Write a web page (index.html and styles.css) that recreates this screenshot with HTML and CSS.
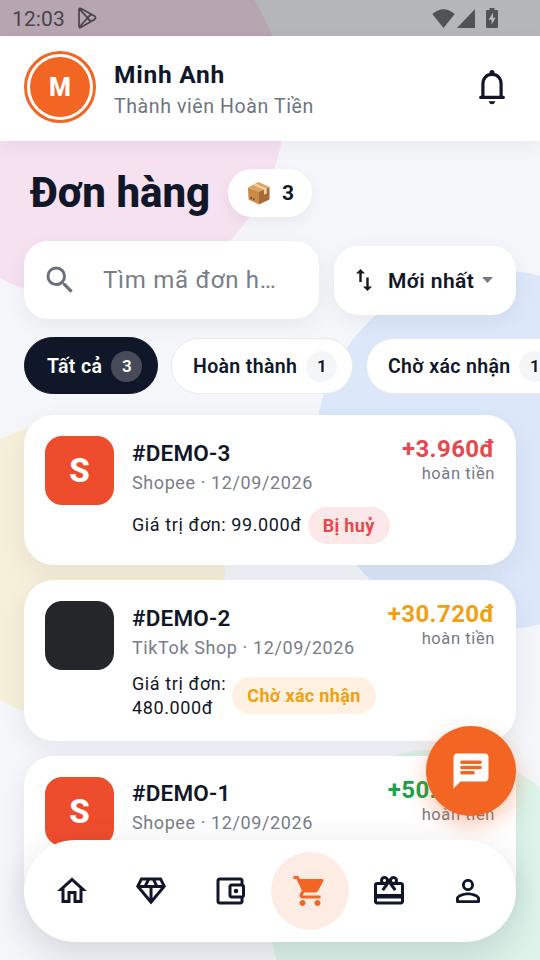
FILE: index.html
```html
<!DOCTYPE html>
<html lang="vi">
<head>
<meta charset="utf-8">
<title>Đơn hàng</title>
<link rel="stylesheet" href="styles.css">
</head>
<body>
<div class="app">
  <div class="blob pink"></div>
  <div class="blob blue"></div>
  <div class="blob yellow"></div>
  <div class="blob green"></div>

  <div class="status">
    <span class="clock">12:03</span>
    <svg class="play" viewBox="0 0 20 22" fill="none" stroke="#49434a" stroke-width="1.7" stroke-linejoin="round"><path d="M2 2.8Q2 .6 4 1.6L17.5 8.9Q19.6 10.6 17.5 12.4L4 20.3Q2 21.200 2 19zM2.400 1.900L14 14.500M2.400 20L14 7M14.500 7.300L10 11l4 3.600"/></svg>
    <div class="signals">
      <svg width="23" height="19" viewBox="0 0 24 19" preserveAspectRatio="none"><path fill="#505254" d="M12 19L.3 5Q12-4.500 23.700 5z"/></svg>
      <svg width="18" height="19" viewBox="0 0 19 19" preserveAspectRatio="none"><path fill="#505254" d="M19 0v19H0z"/></svg>
      <svg class="battery" width="12" height="20" viewBox="0 0 12 20"><path fill="#505254" d="M3.500 0h5v2H11q1 0 1 1v16q0 1-1 1H1q-1 0-1-1V3q0-1 1-1h2.500z"/><path fill="#b5b7ba" d="M7.200 4.500L2.500 11.800h3v5L9.700 9.800H7z"/></svg>
    </div>
  </div>

  <header class="header">
    <div class="avatar"><span>M</span></div>
    <div class="who">
      <div class="name">Minh Anh</div>
      <div class="role">Thành viên Hoàn Tiền</div>
    </div>
    <svg class="bell" viewBox="0 0 36 42" fill="none" stroke="#0f1728" stroke-width="3.200" stroke-linecap="round"><path d="M8.900 31V18.500C8.900 12 12.500 8.400 18 8.400s9.100 3.600 9.100 10.100V31"/><path d="M6.700 31.400h22.600"/><circle cx="18" cy="6.600" r="2.500" fill="#0f1728" stroke="none"/><path d="M14.700 35.300h6.600q-.8 3-3.300 3t-3.300-3z" fill="#0f1728" stroke="none"/></svg>
  </header>

  <main class="content">
    <div class="title-row">
      <h1>Đơn hàng</h1>
      <div class="count">
        <svg width="24" height="24" viewBox="0 0 24 24"><path fill="#c98b4b" d="M1 6.500L12 10.500V23.500L1.500 18.500z"/><path fill="#a86b37" d="M12 10.500L22.500 6v12.500L12 23.500z"/><path fill="#dba465" d="M1 6.500L11.500 1l11 5L12 10.800z"/><path fill="#f0cf9b" d="M6 4l11 4.700v5l2-1 .8.200V7.300L8.500 2.600z"/><path fill="#6b4022" d="M3.500 15.500l1.500.7v2l-1.500-.7zM6 17l1.500.7v1.500L6 18.500z"/></svg>
        <b>3</b>
      </div>
    </div>

    <div class="tools">
      <div class="search">
        <svg width="36" height="36" viewBox="0 0 24 24" fill="#6a717e"><path d="M15.500 14h-.79l-.28-.27A6.471 6.471 0 0 0 16 9.500 6.500 6.500 0 1 0 9.500 16c1.610 0 3.090-.59 4.230-1.570l.27.280v.79l5 4.990L20.490 19l-4.990-5zm-6 0C7.010 14 5 11.990 5 9.500S7.010 5 9.500 5 14 7.010 14 9.500 11.990 14 9.500 14z"/></svg>
        <span>Tìm mã đơn h…</span>
      </div>
      <div class="sort">
        <svg class="swap" width="16" height="22" viewBox="0 0 16 22" fill="#17191d"><path d="M4.500 0L9 4.500H5.700V13H3.300V4.500H0zM11.500 22L7 17.500h3.300V8.500h2.400v9H16z"/></svg>
        <b>Mới nhất</b>
        <svg width="11" height="6" viewBox="0 0 11 6"><path fill="#737a85" d="M0 0h11L5.500 6z"/></svg>
      </div>
    </div>

    <div class="chips">
      <div class="chip active">Tất cả<i>3</i></div>
      <div class="chip second">Hoàn thành<i>1</i></div>
      <div class="chip third">Chờ xác nhận<i>1</i></div>
    </div>

    <section class="orders">
      <article class="card">
        <div class="logo">S</div>
        <div class="info">
          <div class="code">#DEMO-3</div>
          <div class="meta">Shopee · 12/09/2026</div>
          <div class="line"><span>Giá trị đơn: 99.000đ</span><em class="tag red">Bị huỷ</em></div>
        </div>
        <div class="back"><b class="c-red">+3.960đ</b><span>hoàn tiền</span></div>
      </article>
      <article class="card tall">
        <div class="logo dark"></div>
        <div class="info">
          <div class="code">#DEMO-2</div>
          <div class="meta">TikTok Shop · 12/09/2026</div>
          <div class="line"><span>Giá trị đơn:<br>480.000đ</span><em class="tag amber">Chờ xác nhận</em></div>
        </div>
        <div class="back"><b class="c-amber">+30.720đ</b><span>hoàn tiền</span></div>
      </article>
      <article class="card">
        <div class="logo">S</div>
        <div class="info">
          <div class="code">#DEMO-1</div>
          <div class="meta">Shopee · 12/09/2026</div>
        </div>
        <div class="back"><b class="c-green">+50.000đ</b><span>hoàn tiền</span></div>
      </article>
    </section>
  </main>

  <div class="fab">
    <svg width="42" height="42" viewBox="0 0 24 24"><path fill="#fff" d="M20 2H4c-1.100 0-1.990.9-1.990 2L2 22l4-4h14c1.100 0 2-.9 2-2V4c0-1.100-.9-2-2-2z"/><path stroke="#f26522" stroke-width="2" stroke-linecap="round" d="M6.800 7h10.400M6.800 10h10.400M6.800 13h6.400"/></svg>
  </div>

  <nav class="nav">
    <div class="tab"><svg viewBox="0 0 24 24"><path d="M12 5.690l5 4.500V18h-2v-6H9v6H7v-7.810l5-4.500M12 3L2 12h3v8h6v-6h2v6h6v-8h3L12 3z"/></svg></div>
    <div class="tab"><svg viewBox="0 0 24 24"><path d="M19 3H5L2 9l10 12L22 9l-3-6zM9.620 8l1.500-3h1.760l1.500 3H9.620zM11 10v6.680L5.440 10H11zm2 0h5.560L13 16.680V10zm6.260-2h-2.650l-1.500-3h2.650l1.500 3zM6.240 5h2.650l-1.500 3H4.740l1.500-3z"/></svg></div>
    <div class="tab"><svg viewBox="0 0 24 24"><path d="M21 7.280V5c0-1.100-.9-2-2-2H5c-1.110 0-2 .9-2 2v14c0 1.100.89 2 2 2h14c1.100 0 2-.9 2-2v-2.280c.59-.35 1-.98 1-1.720V9c0-.74-.41-1.370-1-1.720zM20 9v6h-7V9h7zM5 19V5h14v2h-6c-1.100 0-2 .9-2 2v6c0 1.100.9 2 2 2h6v2H5z"/><circle cx="16" cy="12" r="1.500"/></svg></div>
    <div class="tab current"><svg viewBox="0 0 24 24"><path d="M7 18c-1.100 0-1.990.9-1.990 2S5.900 22 7 22s2-.9 2-2-.9-2-2-2zM1 2v2h2l3.600 7.590-1.350 2.450c-.16.280-.25.610-.25.960 0 1.100.9 2 2 2h12v-2H7.420c-.14 0-.25-.11-.25-.25l.03-.12.900-1.630h7.450c.75 0 1.410-.41 1.750-1.030l3.580-6.490A1.003 1.003 0 0 0 20 4H5.210l-.94-2H1zm16 16c-1.100 0-1.990.9-1.990 2s.89 2 1.990 2 2-.9 2-2-.9-2-2-2z"/></svg></div>
    <div class="tab"><svg viewBox="0 0 24 24"><path d="M20 6h-2.180c.11-.31.180-.65.180-1a2.996 2.996 0 0 0-5.500-1.650l-.5.670-.5-.68C10.960 2.540 10.050 2 9 2 7.340 2 6 3.340 6 5c0 .35.070.69.180 1H4c-1.110 0-1.990.89-1.990 2L2 19c0 1.110.89 2 2 2h16c1.110 0 2-.89 2-2V8c0-1.110-.89-2-2-2zm-5-2c.55 0 1 .45 1 1s-.45 1-1 1-1-.45-1-1 .45-1 1-1zM9 4c.55 0 1 .45 1 1s-.45 1-1 1-1-.45-1-1 .45-1 1-1zm11 15H4v-2h16v2zm0-5H4V8h5.080L7 10.830 8.620 12 11 8.760l1-1.360 1 1.360L15.380 12 17 10.830 14.920 8H20v6z"/></svg></div>
    <div class="tab"><svg viewBox="0 0 24 24"><path d="M12 5.900a2.100 2.100 0 1 1 0 4.200 2.100 2.100 0 0 1 0-4.200m0 9c2.970 0 6.100 1.460 6.100 2.100v1.100H5.900V17c0-.64 3.130-2.100 6.100-2.100M12 4C9.790 4 8 5.790 8 8s1.790 4 4 4 4-1.790 4-4-1.790-4-4-4zm0 9c-2.670 0-8 1.340-8 4v2q0 1 1 1h14q1 0 1-1v-2c0-2.660-5.330-4-8-4z"/></svg></div>
  </nav>
</div>
</body>
</html>
```

FILE: styles.css
```css
* { box-sizing: border-box; }
body { margin: 0; font-family: Roboto, "Noto Sans", sans-serif; color: #0f1728; }
svg { display: block; flex: none; }
.app { position: relative; width: 540px; height: 960px; overflow: hidden; background: #f4f6fa; }

.blob { position: absolute; border-radius: 50%; }
.pink { width: 390px; height: 390px; left: -105px; top: -90px; background: #f6e1f1; }
.blue { width: 360px; height: 360px; left: 315px; top: 270px; background: #dce8fa; }
.yellow { width: 300px; height: 300px; left: -75px; top: 420px; background: #f6f0da; }
.green { width: 330px; height: 330px; left: 270px; top: 750px; background: #dcf4ea; }

.status { position: relative; display: flex; height: 36px; padding: 0 42px 0 12px; align-items: center; background: rgba(0, 0, 0, .26); }
.clock { font-size: 21px; letter-spacing: .1px; color: #49434a; line-height: 36px; padding-top: 2px; }
.play { width: 20px; height: 22px; margin-left: 12px; }
.signals { display: flex; margin-left: auto; align-items: center; gap: 2px; }
.battery { margin-left: 9px; }

.header { position: relative; display: flex; height: 105px; padding: 15px 31px 18px 24px; align-items: center; background: #fff; box-shadow: 0 6px 18px rgba(15, 23, 40, .05); }
.avatar { display: flex; width: 72px; height: 72px; border: 3px solid #f26522; border-radius: 50%; padding: 3px; }
.avatar span { flex: 1; border-radius: 50%; background: #f26522; color: #fff; font-size: 25px; font-weight: 800; line-height: 61px; text-align: center; }
.who { margin-left: 18px; padding-top: 6px; }
.name { font-size: 24.500px; font-weight: 700; line-height: 32px; letter-spacing: .75px; }
.role { font-size: 19.500px; line-height: 28px; letter-spacing: .6px; color: #6e7480; margin-top: 2px; }
.bell { width: 36px; height: 42px; margin-left: auto; margin-right: -1px; }

.content { position: relative; padding: 27px 0 0 24px; }
.title-row { display: flex; align-items: center; height: 49px; padding-left: 6px; }
h1 { margin: 0; font-size: 42px; font-weight: 800; line-height: 49px; letter-spacing: 0; width: 198px; white-space: nowrap; }
.count { display: flex; width: 84px; height: 48px; border-radius: 24px; align-items: center; padding-left: 19px; gap: 11px; background: #fff; box-shadow: 0 6px 15px rgba(15, 23, 40, .05); }
.count b { font-size: 21px; }

.tools { display: flex; align-items: center; gap: 15px; margin-top: 24px; }
.search { display: flex; width: 295px; height: 78px; align-items: center; padding-left: 18px; gap: 25px; border-radius: 24px; background: #fff; box-shadow: 0 6px 21px rgba(15, 23, 40, .06); }
.search span { font-size: 24px; letter-spacing: .75px; color: #787e89; white-space: nowrap; }
.sort { display: flex; width: 182px; height: 69px; align-items: center; padding-left: 22px; border-radius: 24px; background: #fff; box-shadow: 0 6px 21px rgba(15, 23, 40, .06); }
.sort b { font-size: 21px; font-weight: 600; letter-spacing: .4px; margin: 1px 8px 0 16px; white-space: nowrap; }

.chips { display: flex; align-items: center; margin-top: 18px; height: 57px; width: 516px; overflow: hidden; }
.chip { display: flex; flex: none; align-items: center; height: 57px; border: 1px solid #e8eaee; border-radius: 29px; padding: 1px 0 0 22px; background: #fff; font-size: 19.500px; font-weight: 600; letter-spacing: .35px; white-space: nowrap; }
.chip i { width: 31px; height: 31px; margin-left: 9px; border-radius: 50%; background: #f4f5f7; font-style: normal; font-size: 17px; line-height: 31px; letter-spacing: 0; text-align: center; }
.active { width: 134px; background: #0f1728; border-color: #0f1728; color: #fff; }
.active i { background: #474b59; }
.second { width: 182px; margin-left: 13px; height: 56px; padding-left: 21px; }
.third { width: 216px; margin-left: 13px; height: 56px; padding-left: 21px; }

.orders { display: flex; flex-direction: column; gap: 15px; margin: 21.300px 24px 0 0; }
.card { display: flex; height: 150px; padding: 21px; border-radius: 30px; background: #fff; box-shadow: 0 9px 27px rgba(15, 23, 40, .07); }
.tall { height: 160.500px; }
.logo { flex: none; width: 69px; height: 69px; border-radius: 17px; background: #ee4d2d; color: #fff; font-size: 33px; font-weight: 800; line-height: 69px; text-align: center; }
.dark { background: #25262a; }
.info { flex: none; margin-left: 18px; white-space: nowrap; }
.code { font-size: 22.500px; font-weight: 600; line-height: 30px; letter-spacing: .2px; margin-top: 1.300px; }
.meta { font-size: 18px; letter-spacing: .6px; line-height: 24px; margin-top: 3px; color: #797e87; }
.line { display: flex; align-items: center; gap: 6px; margin-top: 12px; font-size: 18px; line-height: 24px; letter-spacing: .6px; }
.tag { height: 37px; padding: 0 15px; border-radius: 19px; font-size: 18px; font-style: normal; font-weight: 700; line-height: 38px; letter-spacing: .33px; }
.red { background: #fde8e9; color: #e5484d; }
.amber { background: #fef1e2; color: #f0a013; }
.back { display: flex; flex-direction: column; align-items: flex-end; margin: -1px 0 0 auto; white-space: nowrap; }
.back b { font-size: 24px; line-height: 28px; letter-spacing: .4px; }
.back span { font-size: 16.500px; letter-spacing: .6px; line-height: 22px; color: #757a85; }
.c-red { color: #e5484d; }
.c-amber { color: #f0a013; }
.c-green { color: #16a34a; }

.fab { position: absolute; left: 426px; top: 726px; width: 90px; height: 90px; display: flex; align-items: center; justify-content: center; border-radius: 50%; background: #f26522; box-shadow: 0 9px 21px rgba(242, 101, 34, .35); }
.nav { position: absolute; left: 24px; top: 840px; width: 492px; height: 102px; display: flex; align-items: center; justify-content: space-between; padding: 0 9px; border-radius: 51px; background: #fff; box-shadow: 0 12px 36px rgba(15, 23, 40, .14); }
.tab { display: flex; width: 78px; height: 78px; align-items: center; justify-content: center; border-radius: 50%; fill: #0f1728; }
.tab svg { width: 36px; height: 36px; }
.current { background: #fdece4; fill: #f26522; }
```
